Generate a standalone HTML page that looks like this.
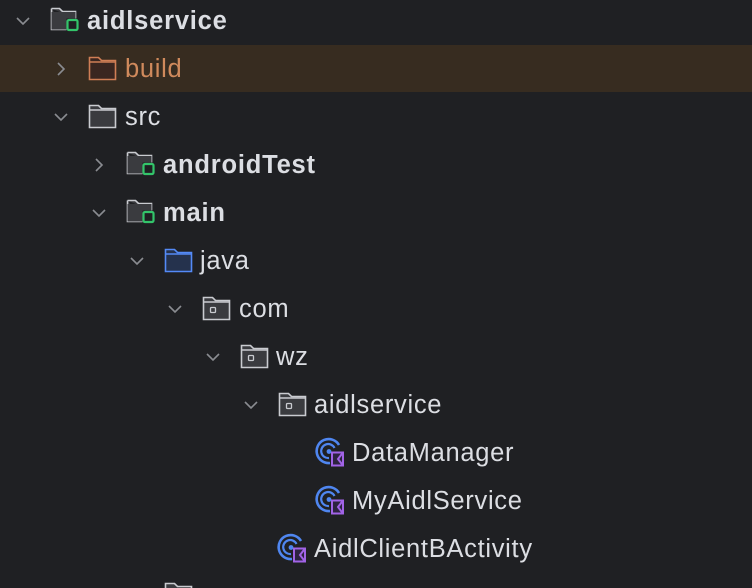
<!DOCTYPE html>
<html><head><meta charset="utf-8"><style>
html,body{margin:0;padding:0;width:752px;height:588px;overflow:hidden;background:#1f2023;font-family:"Liberation Sans",sans-serif;}
.row{position:absolute;left:0;width:752px;height:48px;}
.t{position:absolute;top:9px;font-size:25.5px;letter-spacing:0.7px;color:#dcdee3;line-height:28px;white-space:nowrap;}
.b{font-weight:bold;letter-spacing:0.8px;}
svg{position:absolute;}
#wrap{position:absolute;left:0;top:0;width:752px;height:588px;overflow:hidden;}
</style></head><body><div id="wrap">
<div class="row" style="top:45px;height:47px;background:#372c20"></div>

<svg style="left:14px;top:12px" width="18" height="18" viewBox="0 0 18 18"><path d="M3 6l6 6 6-6" fill="none" stroke="#8a8c91" stroke-width="1.6"/></svg>
<svg style="left:50px;top:6px" width="32" height="30" viewBox="0 0 32 30"><path d="M1.5 2.5h8l3 3h13v7M1.5 2.5v21h15" fill="#3a3b3f" stroke="#c9cbd0" stroke-width="1.6"/><path d="M1.5 6h24v6.5h-9v11h-15z" fill="#3a3b3f"/><rect x="17.5" y="14" width="10" height="10" rx="1.5" fill="#1f2023" stroke="#33c46a" stroke-width="2.2"/></svg>
<div class="t b" style="left:87px;top:7px">aidlservice</div>

<svg style="left:52px;top:60px" width="18" height="18" viewBox="0 0 18 18"><path d="M6 3l6 6-6 6" fill="none" stroke="#8a8c91" stroke-width="1.6"/></svg>
<svg style="left:88px;top:56px" width="30" height="26" viewBox="0 0 30 26"><path d="M1.5 1.5h9l3 3h14v19h-26z" fill="#3a2620" stroke="#cf7e55" stroke-width="1.6"/><path d="M1.5 6h26" stroke="#cf7e55" stroke-width="1.4"/></svg>
<div class="t" style="left:125px;top:55px;color:#d08a5c">build</div>

<svg style="left:52px;top:108px" width="18" height="18" viewBox="0 0 18 18"><path d="M3 6l6 6 6-6" fill="none" stroke="#8a8c91" stroke-width="1.6"/></svg>
<svg style="left:88px;top:104px" width="30" height="26" viewBox="0 0 30 26"><path d="M1.5 1.5h9l3 3h14v19h-26z" fill="#3a3b3f" stroke="#c9cbd0" stroke-width="1.6"/><path d="M1.5 6h26" stroke="#c9cbd0" stroke-width="1.4"/></svg>
<div class="t" style="left:125px;top:103px">src</div>

<svg style="left:90px;top:156px" width="18" height="18" viewBox="0 0 18 18"><path d="M6 3l6 6-6 6" fill="none" stroke="#8a8c91" stroke-width="1.6"/></svg>
<svg style="left:126px;top:150px" width="32" height="30" viewBox="0 0 32 30"><path d="M1.5 2.5h8l3 3h13v7M1.5 2.5v21h15" fill="#3a3b3f" stroke="#c9cbd0" stroke-width="1.6"/><path d="M1.5 6h24v6.5h-9v11h-15z" fill="#3a3b3f"/><rect x="17.5" y="14" width="10" height="10" rx="1.5" fill="#1f2023" stroke="#33c46a" stroke-width="2.2"/></svg>
<div class="t b" style="left:163px;top:151px">androidTest</div>

<svg style="left:90px;top:204px" width="18" height="18" viewBox="0 0 18 18"><path d="M3 6l6 6 6-6" fill="none" stroke="#8a8c91" stroke-width="1.6"/></svg>
<svg style="left:126px;top:198px" width="32" height="30" viewBox="0 0 32 30"><path d="M1.5 2.5h8l3 3h13v7M1.5 2.5v21h15" fill="#3a3b3f" stroke="#c9cbd0" stroke-width="1.6"/><path d="M1.5 6h24v6.5h-9v11h-15z" fill="#3a3b3f"/><rect x="17.5" y="14" width="10" height="10" rx="1.5" fill="#1f2023" stroke="#33c46a" stroke-width="2.2"/></svg>
<div class="t b" style="left:163px;top:199px">main</div>

<svg style="left:128px;top:252px" width="18" height="18" viewBox="0 0 18 18"><path d="M3 6l6 6 6-6" fill="none" stroke="#8a8c91" stroke-width="1.6"/></svg>
<svg style="left:164px;top:248px" width="30" height="26" viewBox="0 0 30 26"><path d="M1.5 1.5h9l3 3h14v19h-26z" fill="#25324d" stroke="#548af7" stroke-width="1.6"/><path d="M1.5 6h26" stroke="#548af7" stroke-width="1.4"/></svg>
<div class="t" style="left:200px;top:247px">java</div>

<svg style="left:166px;top:300px" width="18" height="18" viewBox="0 0 18 18"><path d="M3 6l6 6 6-6" fill="none" stroke="#8a8c91" stroke-width="1.6"/></svg>
<svg style="left:202px;top:296px" width="30" height="26" viewBox="0 0 30 26"><path d="M1.5 1.5h9l3 3h14v19h-26z" fill="#3a3b3f" stroke="#c9cbd0" stroke-width="1.6"/><path d="M1.5 6h26" stroke="#c9cbd0" stroke-width="1.4"/><rect x="8.5" y="11.5" width="5" height="5" rx="1" fill="none" stroke="#c9cbd0" stroke-width="1.3"/></svg>
<div class="t" style="left:239px;top:295px">com</div>

<svg style="left:204px;top:348px" width="18" height="18" viewBox="0 0 18 18"><path d="M3 6l6 6 6-6" fill="none" stroke="#8a8c91" stroke-width="1.6"/></svg>
<svg style="left:240px;top:344px" width="30" height="26" viewBox="0 0 30 26"><path d="M1.5 1.5h9l3 3h14v19h-26z" fill="#3a3b3f" stroke="#c9cbd0" stroke-width="1.6"/><path d="M1.5 6h26" stroke="#c9cbd0" stroke-width="1.4"/><rect x="8.5" y="11.5" width="5" height="5" rx="1" fill="none" stroke="#c9cbd0" stroke-width="1.3"/></svg>
<div class="t" style="left:276px;top:343px">wz</div>

<svg style="left:242px;top:396px" width="18" height="18" viewBox="0 0 18 18"><path d="M3 6l6 6 6-6" fill="none" stroke="#8a8c91" stroke-width="1.6"/></svg>
<svg style="left:278px;top:392px" width="30" height="26" viewBox="0 0 30 26"><path d="M1.5 1.5h9l3 3h14v19h-26z" fill="#3a3b3f" stroke="#c9cbd0" stroke-width="1.6"/><path d="M1.5 6h26" stroke="#c9cbd0" stroke-width="1.4"/><rect x="8.5" y="11.5" width="5" height="5" rx="1" fill="none" stroke="#c9cbd0" stroke-width="1.3"/></svg>
<div class="t" style="left:314px;top:391px">aidlservice</div>

<svg style="left:315px;top:437px" width="32" height="32" viewBox="0 0 32 32"><path d="M24 8A12 12 0 1 0 15 26" fill="none" stroke="#4f86f0" stroke-width="2.6"/><path d="M19.5 11A7 7 0 1 0 14 21" fill="none" stroke="#4f86f0" stroke-width="2.2"/><circle cx="14" cy="14.5" r="2.4" fill="#4f86f0"/><path d="M17 15.5h11v13h-11z" fill="#2d2340" stroke="#a163e6" stroke-width="2"/><path d="M28 15.5l-5 6.5 5 6.5" fill="none" stroke="#a163e6" stroke-width="2"/></svg>
<div class="t" style="left:352px;top:439px">DataManager</div>

<svg style="left:315px;top:485px" width="32" height="32" viewBox="0 0 32 32"><path d="M24 8A12 12 0 1 0 15 26" fill="none" stroke="#4f86f0" stroke-width="2.6"/><path d="M19.5 11A7 7 0 1 0 14 21" fill="none" stroke="#4f86f0" stroke-width="2.2"/><circle cx="14" cy="14.5" r="2.4" fill="#4f86f0"/><path d="M17 15.5h11v13h-11z" fill="#2d2340" stroke="#a163e6" stroke-width="2"/><path d="M28 15.5l-5 6.5 5 6.5" fill="none" stroke="#a163e6" stroke-width="2"/></svg>
<div class="t" style="left:352px;top:487px">MyAidlService</div>

<svg style="left:277px;top:533px" width="32" height="32" viewBox="0 0 32 32"><path d="M24 8A12 12 0 1 0 15 26" fill="none" stroke="#4f86f0" stroke-width="2.6"/><path d="M19.5 11A7 7 0 1 0 14 21" fill="none" stroke="#4f86f0" stroke-width="2.2"/><circle cx="14" cy="14.5" r="2.4" fill="#4f86f0"/><path d="M17 15.5h11v13h-11z" fill="#2d2340" stroke="#a163e6" stroke-width="2"/><path d="M28 15.5l-5 6.5 5 6.5" fill="none" stroke="#a163e6" stroke-width="2"/></svg>
<div class="t" style="left:314px;top:535px">AidlClientBActivity</div>

<svg style="left:164px;top:582px" width="30" height="26" viewBox="0 0 30 26"><path d="M1.5 1.5h9l3 3h14v19h-26z" fill="#3a3b3f" stroke="#c9cbd0" stroke-width="1.6"/></svg>
</div></body></html>
